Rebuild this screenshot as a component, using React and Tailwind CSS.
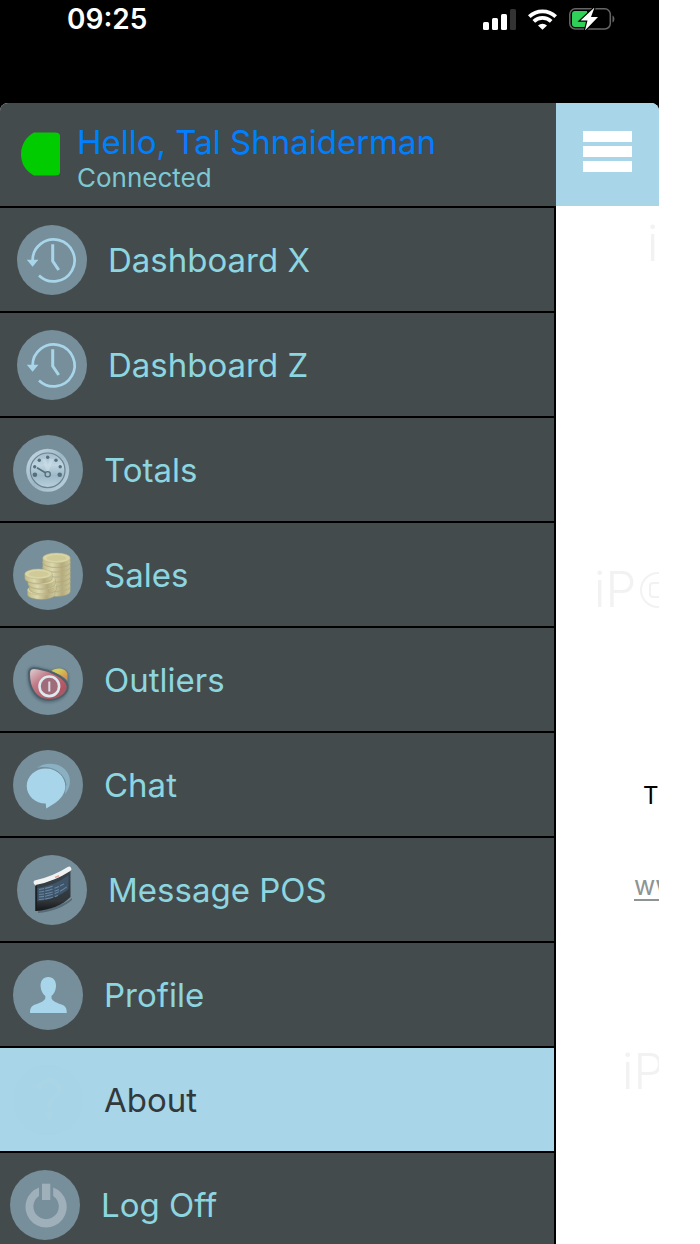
import React from "react";

const Disc = ({ children, fill = "#768f9b" }) => (
  <svg viewBox="0 0 70 70" className="size-[70px] shrink-0" aria-hidden="true">
    <circle cx="35" cy="35" r="35" fill={fill} />
    {children}
  </svg>
);

const HistoryIcon = () => (
  <Disc>
    <g fill="none" stroke="#a8d5e9" strokeWidth="2.7">
      <path d="M15.6 35.5A21 21 0 1 1 22 50.5" />
      <path d="M35.7 19.3V36l6 9" strokeWidth="3" />
    </g>
    <path d="M9.8 34.8h11.6l-5.8 7z" fill="#a8d5e9" />
  </Disc>
);

const GaugeIcon = () => (
  <Disc>
    <defs>
      <linearGradient id="rim" x1="0" y1="0" x2="1" y2="1">
        <stop offset="0" stopColor="#c8dbe5" />
        <stop offset=".5" stopColor="#9fb8c6" />
        <stop offset="1" stopColor="#bfd3de" />
      </linearGradient>
      <linearGradient id="dial" x1="0" y1="0" x2="0" y2="1">
        <stop offset="0" stopColor="#a3bccb" />
        <stop offset=".35" stopColor="#bfd5e1" />
        <stop offset=".65" stopColor="#9fb9c8" />
        <stop offset="1" stopColor="#b9d0dc" />
      </linearGradient>
    </defs>
    <circle cx="34.7" cy="35.3" r="21.5" fill="url(#rim)" />
    <circle cx="34.7" cy="35.3" r="17.3" fill="url(#dial)" stroke="#6b8492" strokeWidth="1.2" />
    <path d="M34.7 39 29 24h4l1.7 6 2-6h4z" fill="#d2e3eb" opacity=".45" />
    <g fill="#566f7d">
      <circle cx="34.7" cy="22.3" r="1.7" />
      <circle cx="26.3" cy="25.3" r="1.7" />
      <circle cx="43" cy="25.3" r="1.7" />
      <circle cx="21.7" cy="31.7" r="1.7" />
      <circle cx="47.2" cy="31.7" r="1.7" />
      <circle cx="21.9" cy="39.7" r="2.3" />
      <circle cx="46.7" cy="39.7" r="2.3" />
    </g>
    <path d="m24 32.8 10.5 6.3" stroke="#566f7d" strokeWidth="1.8" />
    <circle cx="34.7" cy="39.3" r="2.6" fill="#a5bdca" stroke="#566f7d" strokeWidth="1.3" />
  </Disc>
);

const Coin = ({ x, y, rx = 13.7 }) => (
  <g>
    <path
      d={`M${x - rx} ${y}v4.5a${rx} 5 0 0 0 ${rx * 2} 0V${y}z`}
      fill="url(#coin)"
      stroke="#9c9f7c"
      strokeWidth=".5"
    />
    <ellipse cx={x} cy={y} rx={rx} ry="5" fill="#d9d5a6" stroke="#b6b186" strokeWidth=".5" />
    <ellipse cx={x} cy={y} rx={rx - 3.5} ry="3" fill="#cfca98" />
  </g>
);

const CoinsIcon = () => (
  <Disc>
    <defs>
      <linearGradient id="coin">
        <stop offset="0" stopColor="#c3ba86" />
        <stop offset=".35" stopColor="#ddd8ad" />
        <stop offset=".7" stopColor="#b5aa7c" />
        <stop offset="1" stopColor="#cfc897" />
      </linearGradient>
    </defs>
    <Coin x={43.5} y={47} />
    <Coin x={43.5} y={42} />
    <Coin x={43.5} y={37} />
    <Coin x={43.5} y={32.5} />
    <Coin x={43.5} y={27.5} />
    <Coin x={43.5} y={22.5} />
    <Coin x={43.5} y={18} />
    <Coin x={28.2} y={50} />
    <Coin x={30} y={44.5} />
    <Coin x={28.6} y={39.5} />
    <Coin x={25.5} y={34} />
  </Disc>
);

const OutliersIcon = () => (
  <Disc>
    <defs>
      <linearGradient id="red" x1="0" y1="0" x2="1" y2="1">
        <stop offset="0" stopColor="#e0d6dc" />
        <stop offset=".35" stopColor="#c07984" />
        <stop offset=".75" stopColor="#b25461" />
        <stop offset="1" stopColor="#8d6a72" />
      </linearGradient>
      <linearGradient id="amber" x1="0" y1="0" x2="1" y2="1">
        <stop offset=".3" stopColor="#d5c957" />
        <stop offset="1" stopColor="#d3814e" />
      </linearGradient>
      <filter id="soft" x="-20%" y="-20%" width="140%" height="140%">
        <feGaussianBlur stdDeviation="1" />
      </filter>
    </defs>
    <path
      d="M14 30c0-8 4-10 12-8l13 3c7-3 16-2 17 6v12c-1 9-10 15-21 15-12 0-21-11-21-28z"
      fill="#4c626c"
      filter="url(#soft)"
      opacity=".6"
    />
    <path d="M38.500 26c3-3.500 14-4 16 3v7c-4-5-9-7-16-10z" fill="url(#amber)" />
    <path
      d="M16 29c0-6 3-6.500 9-5.500 12 2 26 8 29.500 16.500 1.500 8-8 15-19 15-12 0-19.500-11-19.500-26z"
      fill="url(#red)"
      stroke="#4e606a"
      strokeWidth="2"
    />
    <circle cx="36.300" cy="41.300" r="9.800" fill="#a16c7a" stroke="#dce9ef" strokeWidth="2.600" />
    <path d="M36.300 36.500v10" stroke="#d8dfe6" strokeWidth="2" />
  </Disc>
);

const ChatIcon = () => (
  <Disc>
    <path d="M24 18c6-5 17-6 25-1 9 6 11 18 3 27l1-8c-1-13-15-20-29-18z" fill="#8bb0c1" />
    <path
      d="M33 18.500c10.700 0 19.300 7.800 19.300 17.500 0 8-5 13.500-11 17.500l-8 5-.6-5c-10.500 0-19-7.800-19-17.500S22.300 18.500 33 18.500z"
      fill="#a8d5e9"
    />
    <path d="M24 18.500c13-4 28 4 29 17" fill="none" stroke="#6e8e9d" strokeWidth="1" />
  </Disc>
);

const MessageIcon = () => (
  <Disc>
    <defs>
      <linearGradient id="screen" x1="0" y1="0" x2="0" y2="1">
        <stop offset="0" stopColor="#3a454d" />
        <stop offset=".75" stopColor="#30363a" />
        <stop offset="1" stopColor="#151719" />
      </linearGradient>
    </defs>
    <path d="M21 55c14-1 25-5 34-12v2C47 52 35 57 21 58z" fill="#566b75" />
    <path d="M19 29c13-2 25-7 34.500-14v27C46 50 33 55 19 56z" fill="url(#screen)" />
    <path d="M20.500 33c12-2 22-6 31-13v14c-8 7-19 11-31 12z" fill="#3e5468" />
    <g fill="none" stroke="#6785a2" strokeWidth="1.100" strokeDasharray="5 1 8 2">
      <path d="M22 34.500c6-1 11-2 15-4" />
      <path d="M22 37c9-1 15-3 25-8" />
      <path d="M22 39.500c7-.5 13-2 20-5" />
      <path d="M22 42c11-1 20-4 29-11" />
      <path d="M22 44.500c8-.5 14-2 19-4" />
    </g>
    <path d="M19 31v25" stroke="#151a1d" strokeWidth="1.500" />
    <path d="M19 27.500C31 25 42 20.500 52 14" fill="none" stroke="#f1f2f2" strokeWidth="4.800" strokeLinecap="round" />
    <path d="M38 22.500l4-1.800" stroke="#e7aaa0" strokeWidth="1.500" />
  </Disc>
);

const ProfileIcon = () => (
  <Disc>
    <path
      d="M35.300 17c5.200 0 8 4 7.700 9.500-.3 4-2 7.500-4.500 9.500v2.500c2 3.500 6 4.500 10 6 4 1.600 5.300 3.500 5.300 8.500H17c0-5 1.300-7 5.300-8.500 4-1.500 8-2.500 10-6V36c-2.600-2-4.400-5.500-4.700-9.500C27.300 21 30.100 17 35.300 17z"
      fill="#a8d5e9"
    />
  </Disc>
);

const AboutIcon = () => (
  <Disc fill="#a7d4e6">
    <path
      d="M26 25c0-13 20-12 20-1 0 8-10 9-10 18M36 47v6"
      fill="none"
      stroke="#a9d5e7"
      strokeWidth="5"
    />
  </Disc>
);

const PowerIcon = () => (
  <Disc>
    <path
      d="M29 17.600v8.300a12.700 12.700 0 1 0 14.200 0v-8.300a20.600 20.600 0 1 1-14.200 0z"
      fill="#a0b0ba"
    />
    <path d="M32 13.700h8.300V30H32z" fill="#a0b0ba" />
  </Disc>
);

const items = [
  { label: "Dashboard X", Icon: HistoryIcon, pad: "pl-[17px]" },
  { label: "Dashboard Z", Icon: HistoryIcon, pad: "pl-[17px]" },
  { label: "Totals", Icon: GaugeIcon, pad: "pl-[13px]" },
  { label: "Sales", Icon: CoinsIcon, pad: "pl-[13px]" },
  { label: "Outliers", Icon: OutliersIcon, pad: "pl-[13px]" },
  { label: "Chat", Icon: ChatIcon, pad: "pl-[13px]" },
  { label: "Message POS", Icon: MessageIcon, pad: "pl-[17px]" },
  { label: "Profile", Icon: ProfileIcon, pad: "pl-[13px]" },
  { label: "About", Icon: AboutIcon, pad: "pl-[13px]", active: true },
  { label: "Log Off", Icon: PowerIcon, pad: "pl-[10px]" },
];

const StatusBar = () => (
  <div className="flex h-[103px] shrink-0 items-start justify-between pt-1 pr-11 pl-[67px]">
    <time className="text-[28px] leading-[30px] font-semibold text-white">09:25</time>
    <div className="flex items-center gap-3 pt-1">
      <svg viewBox="0 0 33 21" className="h-[21px] w-[33px]" aria-label="Signal">
        <g fill="#fff">
          <rect y="13" width="6" height="8" rx="1.5" />
          <rect x="9" y="9" width="6" height="12" rx="1.5" />
          <rect x="18" y="5" width="6" height="16" rx="1.5" />
        </g>
        <rect x="27" width="6" height="21" rx="1.5" fill="#333" />
      </svg>
      <svg viewBox="0 0 29 21" className="h-[21px] w-[29px]" aria-label="Wi-Fi">
        <g fill="none" stroke="#fff" strokeWidth="3.8">
          <path d="M1.300 7.700a19 19 0 0 1 26.400 0" />
          <path d="M5.800 12.300a12.700 12.700 0 0 1 17.400 0" />
        </g>
        <path d="M14.500 20.800 10 16.500a6.600 6.600 0 0 1 9 0z" fill="#fff" />
      </svg>
      <svg viewBox="0 0 46 22" className="h-[22px] w-[46px]" aria-label="Battery charging">
        <rect x=".8" y=".8" width="40.500" height="20.200" rx="5.500" fill="none" stroke="#666" strokeWidth="1.500" />
        <path d="M43.500 7.500c2.500 1 2.500 6 0 7z" fill="#666" />
        <path d="M6 3h12v16H6a3 3 0 0 1-3-3V6a3 3 0 0 1 3-3z" fill="#30d158" />
        <path
          d="M25.500-.5 11.500 12.500h7L16 22.500l13-13.500h-7z"
          fill="#fff"
          stroke="#000"
          strokeWidth="2.400"
          paintOrder="stroke"
        />
      </svg>
    </div>
  </div>
);

const Watermark = () => (
  <span className="flex items-center gap-1 text-[49px] leading-[60px] font-light whitespace-nowrap text-[#f2f2f2]">
    iP
    <svg viewBox="0 0 36 36" className="size-9 shrink-0" fill="none" stroke="#f2f2f2" strokeWidth="2" aria-hidden="true">
      <circle cx="18" cy="18" r="17" />
      <rect x="10" y="11" width="16" height="14" rx="3" />
    </svg>
  </span>
);

export default function App() {
  return (
    <div className="h-screen overflow-hidden bg-white pr-[41px] font-['Inter',sans-serif]">
      <div className="flex h-full flex-col bg-black">
        <StatusBar />
        <div className="flex min-h-0 flex-1 overflow-hidden rounded-t-lg bg-white">
          <nav className="flex-1" aria-label="Main menu">
            <header className="flex h-[105px] items-center gap-[17px] border-b-2 border-black bg-[#444b4d] pb-0.5 pl-[21px]">
              <svg viewBox="0 0 39 44" className="h-11 w-[39px] shrink-0" aria-hidden="true">
                <path d="M13 .5h21q5 0 5 3.500v36q0 3.500-5 3.500H13C5 39.500 0 32 0 22S6 4 13 .5z" fill="#0c0" />
              </svg>
              <div className="pt-3">
                <h1 className="text-[33px] leading-9 font-normal whitespace-nowrap text-[#007fff]">
                  Hello, Tal Shnaiderman
                </h1>
                <p className="text-[26px] leading-9 font-normal text-[#7dc9d3]">Connected</p>
              </div>
            </header>
            <ul className="border-r-2 border-black bg-[#444b4d]">
              {items.map(({ label, Icon, pad, active }) => (
                <li key={label} className="border-b-2 border-black">
                  <button
                    type="button"
                    aria-current={active ? "page" : undefined}
                    className={`flex h-[103px] w-full items-center gap-[21px] text-left text-[33px] leading-10 ${pad} ${
                      active ? "bg-[#a8d5e7] text-[#31393c]" : "text-[#8dd6e0]"
                    }`}
                  >
                    <Icon />
                    {label}
                  </button>
                </li>
              ))}
            </ul>
          </nav>
          <main className="w-[103px] shrink-0 overflow-hidden">
            <button
              type="button"
              aria-label="Toggle menu"
              className="flex h-[103px] w-full flex-col items-center justify-center gap-1 bg-[#a8d5e7] pb-1.5"
            >
              <span className="h-[11px] w-[49px] bg-white" />
              <span className="h-[11px] w-[49px] bg-white" />
              <span className="h-[11px] w-[49px] bg-white" />
            </button>
            <div className="pt-2 pl-[91px]">
              <Watermark />
            </div>
            <div className="pt-[286px] pl-[38px]">
              <Watermark />
            </div>
            <p className="pt-[160px] pl-[87px] text-[24px] leading-[32px] text-black">T</p>
            <div className="pt-[58px] pl-[78px]">
              <a href="#site" className="text-[26px] leading-[32px] text-[#8e9496] underline decoration-2 underline-offset-4">
                www
              </a>
            </div>
            <div className="pt-[140px] pl-[66px]">
              <Watermark />
            </div>
          </main>
        </div>
      </div>
    </div>
  );
}
